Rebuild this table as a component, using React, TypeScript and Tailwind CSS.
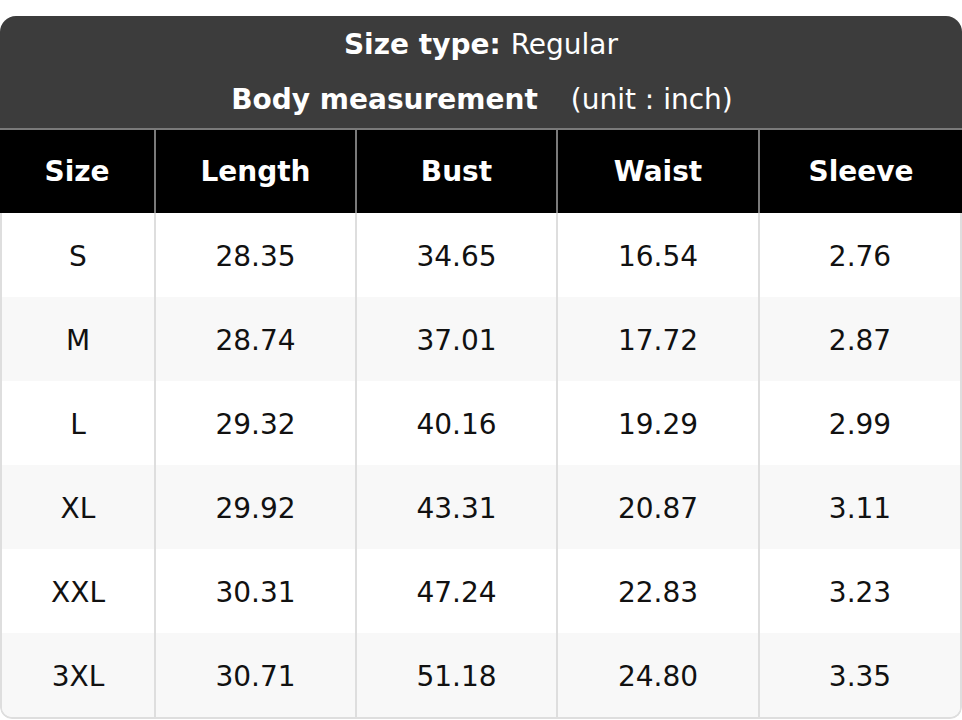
import React from 'react';

const COLUMNS = ['Size', 'Length', 'Bust', 'Waist', 'Sleeve'];

const ROWS: string[][] = [
  ['S', '28.35', '34.65', '16.54', '2.76'],
  ['M', '28.74', '37.01', '17.72', '2.87'],
  ['L', '29.32', '40.16', '19.29', '2.99'],
  ['XL', '29.92', '43.31', '20.87', '3.11'],
  ['XXL', '30.31', '47.24', '22.83', '3.23'],
  ['3XL', '30.71', '51.18', '24.80', '3.35'],
];

const WIDTHS = ['w-[154px]', 'w-[201px]', 'w-[201px]', 'w-[202px]', 'flex-1'];

export default function App() {
  return (
    <div
      className="bg-white w-[962px] h-[720px] pt-4"
      style={{ fontFamily: '"DejaVu Sans", sans-serif' }}
    >
      <div className="rounded-t-2xl rounded-b-xl overflow-hidden">
        <div className="bg-[#3c3c3c] text-white text-[28px] leading-none">
          <div className="h-[56px] flex items-center justify-center pt-[2px]">
            <span className="font-bold">Size type:</span>
            <span className="ml-[10px]">Regular</span>
          </div>
          <div className="h-[56px] flex items-center justify-center pl-[2px]">
            <span className="font-bold">Body measurement</span>
            <span className="ml-[33px]">(unit : inch)</span>
          </div>
        </div>
        <div className="border-t-2 border-[#7a7a7a] flex bg-black text-white font-bold text-[28px] h-[85px]">
          {COLUMNS.map((c, i) => (
            <div
              key={c}
              className={`${WIDTHS[i]} flex items-center justify-center ${i > 0 ? 'border-l-2 border-[#7a7a7a]' : ''}`}
            >
              {c}
            </div>
          ))}
        </div>
        <div className="border-x-2 border-b-2 border-[#dedede] rounded-b-xl overflow-hidden">
          {ROWS.map((row, r) => (
            <div
              key={row[0]}
              className={`flex h-[84px] text-[28px] text-[#111] pt-[3px] ${r % 2 === 1 ? 'bg-[#f8f8f8]' : 'bg-white'}`}
            >
              {row.map((v, i) => (
                <div
                  key={i}
                  className={`${i === 0 ? 'w-[152px]' : WIDTHS[i]} flex items-center justify-center ${i > 0 ? 'border-l-2 border-[#dedede] -mt-[3px] pt-[3px]' : ''}`}
                >
                  {v}
                </div>
              ))}
            </div>
          ))}
        </div>
      </div>
    </div>
  );
}
